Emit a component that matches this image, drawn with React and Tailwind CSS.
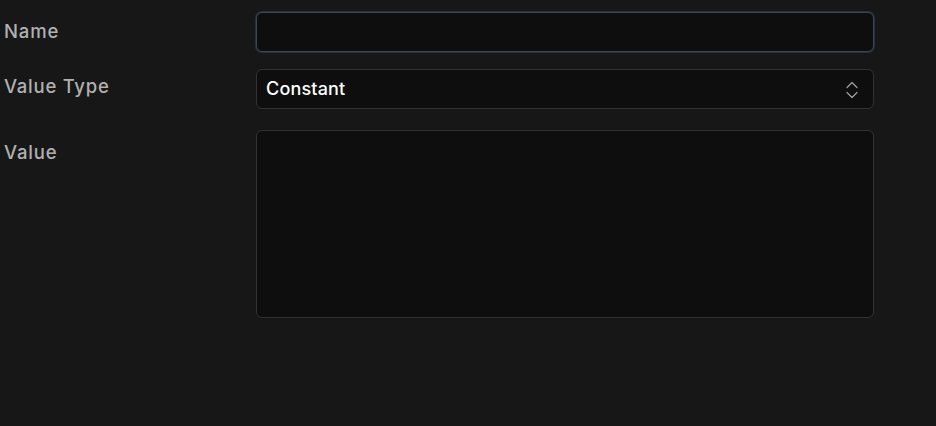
import React from "react";

export default function App() {
  return (
    <div className="w-[936px] h-[426px] bg-[#171717] overflow-hidden" style={{ fontFamily: "Inter, 'Noto Sans', sans-serif" }}>
      <div className="flex flex-col pt-[12px]">
        <div className="flex items-center">
          <div className="w-[256px] pl-[4px] pb-[2px] text-[18.5px] font-medium text-[#b0b0b0] leading-none tracking-[0.045em]">Name</div>
          <div className="w-[618px] h-[40px] rounded-[6px] bg-[#0e0e0e] border border-[#3a4754] ring-1 ring-[#27313b]" />
        </div>
        <div className="flex items-center mt-[17px]">
          <div className="w-[256px] pl-[4px] text-[18.5px] font-medium text-[#b0b0b0] leading-none pb-[6px] tracking-[0.04em]">Value Type</div>
          <div className="w-[618px] h-[40px] rounded-[6px] bg-[#0e0e0e] border border-[#323232] flex items-center justify-between pl-[9px] pr-[14px]">
            <span className="text-[18px] text-white font-medium leading-none tracking-[0.01em]">Constant</span>
            <svg width="14" height="22" viewBox="0 0 14 22" fill="none" stroke="#a0a0a0" strokeWidth="1.2" strokeLinecap="round" strokeLinejoin="round">
              <path d="M2 9.5 L7 4.5 L12 9.5" />
              <path d="M2 14.5 L7 19.5 L12 14.5" />
            </svg>
          </div>
        </div>
        <div className="flex items-start mt-[21px]">
          <div className="w-[256px] pl-[4px] pt-[13px] text-[18.5px] font-medium text-[#b0b0b0] leading-none tracking-[0.045em]">Value</div>
          <div className="w-[618px] h-[188px] rounded-[6px] bg-[#0e0e0e] border border-[#323232]" />
        </div>
      </div>
    </div>
  );
}
